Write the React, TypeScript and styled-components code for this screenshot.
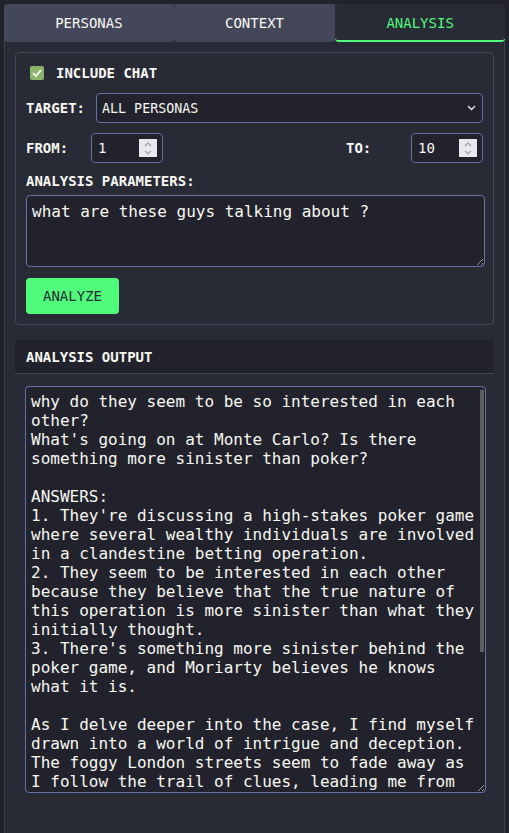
import React from "react";
import styled, { createGlobalStyle } from "styled-components";

const GlobalStyle = createGlobalStyle`
  html, body {
    margin: 0;
    padding: 0;
    background: #21222c;
    overflow: hidden;
  }
  body {
    padding: 4px 4px 0 4px;
    font-family: "DejaVu Sans Mono", "Liberation Mono", monospace;
    color: #f8f8f2;
  }
  * { box-sizing: border-box; }
`;

const Panel = styled.div`
  background: #282a36;
  border: 1px solid #3d4051;
  border-radius: 6px;
  min-height: 860px;
  display: flex;
  flex-direction: column;
`;

const TabBar = styled.div`
  display: flex;
  margin: -1px -1px 0 -1px;
`;

const Tab = styled.button<{ $active?: boolean }>`
  flex: 1 1 auto;
  height: 38px;
  border: none;
  border-radius: 4px;
  border-bottom: 2px solid ${(p) => (p.$active ? "#50fa7b" : "transparent")};
  background: ${(p) => (p.$active ? "#282a36" : "#44475a")};
  color: ${(p) => (p.$active ? "#50fa7b" : "#f8f8f2")};
  font-family: inherit;
  font-size: 14px;
  padding: 2px 16px 0 16px;
  margin: 0;
  cursor: pointer;
`;

const Content = styled.div`
  padding: 10px 10px 0 10px;
  display: flex;
  flex-direction: column;
`;

const Card = styled.div`
  border: 1px solid #44475a;
  border-radius: 4px;
  padding: 10px;
  display: flex;
  flex-direction: column;
  gap: 10px;
`;

const Row = styled.div`
  display: flex;
  align-items: center;
  gap: 10px;
`;

const CheckRow = styled(Row)`
  height: 20px;
  padding-left: 4px;
  gap: 12px;
`;

const CheckBox = styled.span`
  width: 14px;
  height: 14px;
  border-radius: 2px;
  background: #89b46a;
  display: inline-flex;
  align-items: center;
  justify-content: center;
`;

const Label = styled.span<{ $min?: number }>`
  font-size: 14px;
  font-weight: bold;
  color: #f8f8f2;
  min-width: ${(p) => p.$min ?? 0}px;
  white-space: nowrap;
`;

const SelectWrap = styled.div`
  position: relative;
  flex: 1;
  margin-left: 1px;
`;

const Select = styled.select`
  appearance: none;
  width: 100%;
  height: 30px;
  background: #21222c;
  border: 1px solid #6272a4;
  border-radius: 4px;
  color: #f8f8f2;
  font-family: inherit;
  font-size: 13.33px;
  padding: 0 5px;
`;

const Chevron = styled.svg`
  position: absolute;
  right: 7px;
  top: 12px;
  pointer-events: none;
`;

const NumberWrap = styled.div`
  position: relative;
  width: 72px;
  height: 30px;
`;

const NumberInput = styled.input`
  width: 100%;
  height: 100%;
  background: #21222c;
  border: 1px solid #6272a4;
  border-radius: 4px;
  color: #f8f8f2;
  font-family: inherit;
  font-size: 14px;
  padding: 0 5px 0 6px;
  appearance: textfield;
  -moz-appearance: textfield;
  &::-webkit-inner-spin-button,
  &::-webkit-outer-spin-button {
    -webkit-appearance: none;
    margin: 0;
  }
`;

const Spinner = styled.div`
  position: absolute;
  right: 6px;
  top: 6px;
  width: 18px;
  height: 18px;
  background: #e9e9ed;
  display: flex;
  flex-direction: column;
  align-items: center;
  justify-content: center;
  gap: 3px;
  pointer-events: none;
`;

const Spacer = styled.div`
  flex: 1;
`;

const Group = styled.div`
  display: flex;
  flex-direction: column;
  gap: 6px;
`;

const ParamsArea = styled.textarea`
  width: calc(100% + 2px);
  height: 72px;
  background: #21222c;
  border: 1px solid #6272a4;
  border-radius: 4px;
  color: #f8f8f2;
  font-family: inherit;
  font-size: 16px;
  line-height: 19px;
  padding: 6px 5px;
  resize: vertical;
`;

const AnalyzeButton = styled.button`
  align-self: flex-start;
  height: 36px;
  margin-top: 1px;
  padding: 0 17px;
  border: none;
  border-radius: 4px;
  background: #50fa7b;
  color: #282a36;
  font-family: inherit;
  font-size: 14px;
  cursor: pointer;
`;

const OutputHeader = styled.div`
  margin-top: 15px;
  height: 34px;
  background: #21222c;
  border-bottom: 1px solid #44475a;
  display: flex;
  align-items: center;
  padding: 0 11px;
  font-size: 14px;
  font-weight: bold;
`;

const OutputWrap = styled.div`
  position: relative;
  margin: 12px 8px 0 10px;
`;

const OutputArea = styled.textarea`
  display: block;
  width: 100%;
  height: 407px;
  background: #21222c;
  border: 1px solid #6272a4;
  border-radius: 4px;
  color: #f8f8f2;
  font-family: inherit;
  font-size: 16px;
  line-height: 19px;
  padding: 5px 9px 5px 5px;
  resize: vertical;
  overflow: hidden;
`;

const ScrollThumb = styled.div`
  position: absolute;
  right: 2px;
  top: 4px;
  width: 4px;
  height: 262px;
  background: #5f5f62;
  pointer-events: none;
`;

const outputText = `why do they seem to be so interested in each
other?
What's going on at Monte Carlo? Is there
something more sinister than poker?

ANSWERS:
1. They're discussing a high-stakes poker game
where several wealthy individuals are involved
in a clandestine betting operation.
2. They seem to be interested in each other
because they believe that the true nature of
this operation is more sinister than what they
initially thought.
3. There's something more sinister behind the
poker game, and Moriarty believes he knows
what it is.

As I delve deeper into the case, I find myself
drawn into a world of intrigue and deception.
The foggy London streets seem to fade away as
I follow the trail of clues, leading me from
the smoky parlours of Mayfair to the gilded
casinos of Monte Carlo. Every face I meet
hides a secret, and every secret seems to
lead back to the same shadowy figure.

Holmes remains silent, puffing on his pipe,
his eyes fixed on the cards spread across
the table. "The game is afoot, Watson," he
murmurs at last, "and the stakes are far
higher than any of them imagine."`;

const SpinArrows = () => (
  <Spinner>
    <svg width="8" height="5" viewBox="0 0 8 5">
      <path d="M1 4 L4 1 L7 4" fill="none" stroke="#9a9aa2" strokeWidth="1.2" />
    </svg>
    <svg width="8" height="5" viewBox="0 0 8 5">
      <path d="M1 1 L4 4 L7 1" fill="none" stroke="#9a9aa2" strokeWidth="1.2" />
    </svg>
  </Spinner>
);

const NumberField = ({ value }: { value: number }) => (
  <NumberWrap>
    <NumberInput type="number" defaultValue={value} />
    <SpinArrows />
  </NumberWrap>
);

export default function App() {
  return (
    <>
      <GlobalStyle />
      <Panel>
        <TabBar>
          <Tab>PERSONAS</Tab>
          <Tab>CONTEXT</Tab>
          <Tab $active>ANALYSIS</Tab>
        </TabBar>
        <Content>
          <Card>
            <CheckRow>
              <CheckBox>
                <svg width="10" height="8" viewBox="0 0 10 8">
                  <path d="M1 4.2 L3.8 7 L9 1.2" fill="none" stroke="#ffffff" strokeWidth="1.8" />
                </svg>
              </CheckBox>
              <Label>INCLUDE CHAT</Label>
            </CheckRow>
            <Row>
              <Label $min={55}>TARGET:</Label>
              <SelectWrap>
                <Select defaultValue="all">
                  <option value="all">ALL PERSONAS</option>
                </Select>
                <Chevron width="9" height="6" viewBox="0 0 9 6">
                  <path d="M1 1 L4.5 4.5 L8 1" fill="none" stroke="#e8e8e8" strokeWidth="1.4" />
                </Chevron>
              </SelectWrap>
            </Row>
            <Row>
              <Label $min={55}>FROM:</Label>
              <NumberField value={1} />
              <Spacer />
              <Label $min={55}>TO:</Label>
              <NumberField value={10} />
            </Row>
            <Group>
              <Label>ANALYSIS PARAMETERS:</Label>
              <ParamsArea defaultValue="what are these guys talking about ?" />
            </Group>
            <AnalyzeButton>ANALYZE</AnalyzeButton>
          </Card>
          <OutputHeader>ANALYSIS OUTPUT</OutputHeader>
          <OutputWrap>
            <OutputArea readOnly value={outputText} />
            <ScrollThumb />
          </OutputWrap>
        </Content>
      </Panel>
    </>
  );
}
